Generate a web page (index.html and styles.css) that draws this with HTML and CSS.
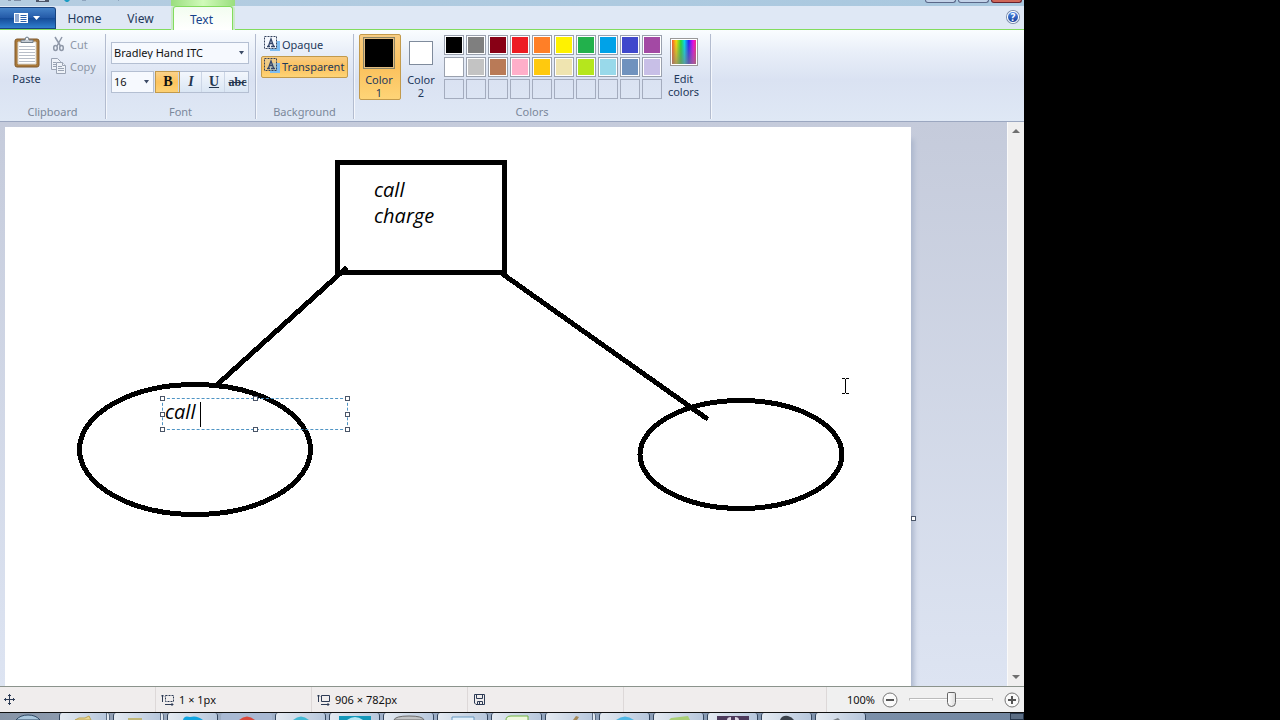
FILE: index.html
```html
<!DOCTYPE html>
<html lang="en">
<head>
    <meta charset="UTF-8">
    <meta name="viewport" content="width=device-width, initial-scale=1.0">
    <title>Paint</title>
    <link rel="stylesheet" href="styles.css">
</head>
<body>
    <div class="window">
        <header class="titlebar">
            <svg class="quick-icons" width="120" height="6" viewBox="0 0 120 6">
                <path d="M8 0h3v1H8zM14 0h7v1h-7z" fill="#7d8da5"/>
                <path d="M36 0h13v2H36z" fill="#4c5568"/>
                <path d="M39 0h6v1h-6z" fill="#c9d6e6"/>
                <path d="M64 0h6l-2 2h-2z" fill="#1b9cc4"/>
                <path d="M82 0h4v1h-4zM118 0h1v1h-1z" fill="#8fa5be"/>
            </svg>
            <div class="context-title"></div>
            <div class="caption-buttons">
                <button class="caption" aria-label="Minimize"></button>
                <button class="caption" aria-label="Maximize"></button>
                <button class="caption close" aria-label="Close"></button>
            </div>
        </header>

        <nav class="tabs">
            <button class="file-button" aria-label="Paint menu">
                <svg width="28" height="12" viewBox="0 0 28 12">
                    <path d="M1 1h14v10H1z" fill="#fff"/>
                    <path d="M2 2h4v8H2z" fill="#8fa9d2"/>
                    <path d="M7.500 3.500h6M7.500 5.500h6M7.500 7.500h6M7.500 9.500h6" stroke="#2d62ac"/>
                    <path d="M20 4h7l-3.500 4z" fill="#fff"/>
                </svg>
            </button>
            <a class="tab" href="#home">Home</a>
            <a class="tab" href="#view">View</a>
            <a class="tab active" href="#text">Text</a>
            <button class="help" aria-label="Help">?</button>
        </nav>

        <section class="ribbon">
            <div class="group clipboard">
                <div class="group-body">
                    <button class="paste">
                        <svg width="26" height="32" viewBox="0 0 26 32">
                            <rect x="1" y="3" width="24" height="28" rx="2" fill="#a9793a" stroke="#80592b"/>
                            <path d="M4 6h18v22H4z" fill="#fff" stroke="#d6d2ca"/>
                            <path d="M5 10.500h16M5 13.500h16M5 16.500h16M5 19.500h16M5 22.500h16M5 25.500h16" stroke="#b8bec8"/>
                            <path d="M7 6.500V4h4q0-3 2-3t2 3h4v2.500z" fill="#c6cdd5" stroke="#707d8a"/>
                            <circle cx="13" cy="3" r="1" fill="#fff"/>
                        </svg>
                        <span>Paste</span>
                    </button>
                    <div class="stack">
                        <button class="small-button" disabled>
                            <svg width="16" height="16" viewBox="0 0 16 16" fill="none" stroke="#8f98a8" stroke-width="1.500">
                                <path d="M4 1l5.500 9M11 1l-5 9"/>
                                <ellipse cx="4.500" cy="12" rx="1.800" ry="2.500"/>
                                <ellipse cx="10.500" cy="12" rx="1.800" ry="2.500"/>
                            </svg>
                            Cut
                        </button>
                        <button class="small-button" disabled>
                            <svg width="16" height="16" viewBox="0 0 16 16" fill="#eef2f8" stroke="#9aa3b3">
                                <path d="M.5.5h6l3 3v8h-9z"/>
                                <path d="M2 4.500h3M2 6.500h3M2 8.500h3"/>
                                <path d="M5.500 4.500h6l3 3v8h-9z"/>
                                <path d="M11.500 4.500v3h3M7 8.500h4M7 10.500h6M7 12.500h6"/>
                            </svg>
                            Copy
                        </button>
                    </div>
                </div>
                <div class="group-label">Clipboard</div>
            </div>

            <div class="group font">
                <div class="group-body font-body">
                    <div class="combo">
                        <select aria-label="Font family"><option>Bradley Hand ITC</option></select>
                        <svg width="7" height="4" viewBox="0 0 7 4"><path d="M1 0h5L3.500 3.500z" fill="#3c4b66"/></svg>
                    </div>
                    <div class="font-row">
                        <div class="combo size">
                            <select aria-label="Font size"><option>16</option></select>
                            <svg width="7" height="4" viewBox="0 0 7 4"><path d="M1 0h5L3.500 3.500z" fill="#3c4b66"/></svg>
                        </div>
                        <div class="styles">
                            <button class="style-button on"><b>B</b></button>
                            <button class="style-button"><i>I</i></button>
                            <button class="style-button"><u>U</u></button>
                            <button class="style-button strike"><s>abc</s></button>
                        </div>
                    </div>
                </div>
                <div class="group-label">Font</div>
            </div>

            <div class="group background">
                <div class="group-body background-body">
                    <button class="option">
                        <svg width="16" height="16" viewBox="0 0 16 16">
                            <path d="M6 5h10v10H6z" fill="#7dbcf0"/>
                            <path d="M.5.5h12v12H.5z" fill="#f5f8fd" stroke="#35425c" stroke-dasharray="2 1"/>
                            <path d="M3 10.500h3M7 10.500h4M4.500 10l2.500-7 2.500 7M5 7.500h4" fill="none" stroke="#34466a" stroke-width="1.300"/>
                        </svg>
                        Opaque
                    </button>
                    <button class="option on">
                        <svg width="16" height="16" viewBox="0 0 16 16">
                            <path d="M6 5h10v10H6z" fill="#7dbcf0"/>
                            <path d="M.5.5h12v12H.5z" fill="#e7cf98" fill-opacity=".6" stroke="#35425c" stroke-dasharray="2 1"/>
                            <path d="M3 10.500h3M7 10.500h4M4.500 10l2.500-7 2.500 7M5 7.500h4" fill="none" stroke="#34466a" stroke-width="1.300"/>
                        </svg>
                        Transparent
                    </button>
                </div>
                <div class="group-label">Background</div>
            </div>

            <div class="group colors">
                <div class="group-body colors-body">
                    <button class="color-button on">
                        <span class="chip black"></span>
                        <span>Color<br>1</span>
                    </button>
                    <button class="color-button">
                        <span class="chip white"></span>
                        <span>Color<br>2</span>
                    </button>
                    <div class="palette" id="palette"></div>
                    <button class="edit-colors">
                        <span class="rainbow"></span>
                        <span>Edit<br>colors</span>
                    </button>
                </div>
                <div class="group-label">Colors</div>
            </div>
        </section>

        <main class="workspace">
            <div class="viewport">
                <div class="canvas">
                    <svg class="drawing" width="906" height="782" viewBox="0 0 906 782" fill="none" stroke="#000" stroke-width="5" stroke-linecap="round" shape-rendering="crispEdges">
                        <rect x="332.500" y="35.500" width="167" height="110"/>
                        <path d="M340 142L214 256M499 148L701 291"/>
                        <ellipse cx="190" cy="322.500" rx="115.500" ry="65"/>
                        <ellipse cx="736" cy="327.500" rx="101" ry="54"/>
                    </svg>
                    <p class="note">call<br>charge</p>
                    <div class="text-frame">
                        <input type="text" value="call" aria-label="Text">
                        <span class="caret"></span>
                        <i class="handle nw"></i><i class="handle n"></i><i class="handle ne"></i>
                        <i class="handle w"></i><i class="handle e"></i>
                        <i class="handle sw"></i><i class="handle s"></i><i class="handle se"></i>
                    </div>
                    <svg class="pointer" width="7" height="16" viewBox="0 0 7 16" fill="none" stroke="#000">
                        <path d="M0 .5h3M4 .5h3M3.500 1v14M0 15.500h3M4 15.500h3"/>
                    </svg>
                    <i class="handle resize"></i>
                </div>
            </div>
            <div class="scrollbar">
                <svg width="8" height="4" viewBox="0 0 8 4"><path d="M0 4l4-4 4 4z" fill="#6f6f6f"/></svg>
                <svg width="8" height="4" viewBox="0 0 8 4"><path d="M0 0l4 4 4-4z" fill="#6f6f6f"/></svg>
            </div>
        </main>

        <footer class="statusbar">
            <div class="cell">
                <svg width="11" height="11" viewBox="0 0 11 11" fill="none" stroke="#2d3b55">
                    <path d="M5.500 0v11M0 5.500h11M4 2l1.500-1.500L7 2M4 9l1.500 1.500L7 9M2 4L.5 5.500 2 7M9 4l1.500 1.500L9 7"/>
                </svg>
            </div>
            <div class="cell">
                <svg width="13" height="12" viewBox="0 0 13 12" fill="none" stroke="#2d3b55">
                    <path d="M1.500 1v7M0 2.500L1.500 1 3 2.500M4 10.500h8M10.500 9l1.500 1.500-1.500 1.500"/>
                    <path d="M4.500 1.500h8v6h-8z" stroke-dasharray="2 1"/>
                </svg>
                1 × 1px
            </div>
            <div class="cell">
                <svg width="13" height="12" viewBox="0 0 13 12" fill="none" stroke="#2d3b55">
                    <path d="M1.500 1v7M0 2.500L1.500 1 3 2.500M4 10.500h8M10.500 9l1.500 1.500-1.500 1.500"/>
                    <path d="M4.500 1.500h8v6h-8z"/>
                </svg>
                906 × 782px
            </div>
            <div class="cell">
                <svg width="12" height="11" viewBox="-1 0 12 11" fill="none" stroke="#2d3b55">
                    <path d="M.5.5h10v10H2l-1.500-1.500zM2.500.5v4h6v-4M3.500 10.500v-3h5v3M5.500 8v2"/>
                </svg>
            </div>
            <div class="cell wide"></div>
            <div class="zoom">
                <label for="zoom">100%</label>
                <button class="round" aria-label="Zoom out">
                    <svg width="16" height="16" viewBox="0 0 16 16"><circle cx="8" cy="8" r="7" fill="#fafafa" stroke="#777"/><path d="M4 8h8" stroke="#555" stroke-width="2"/></svg>
                </button>
                <input type="range" id="zoom" min="0" max="100" value="50">
                <button class="round" aria-label="Zoom in">
                    <svg width="16" height="16" viewBox="0 0 16 16"><circle cx="8" cy="8" r="7" fill="#fafafa" stroke="#777"/><path d="M4 8h8M8 4v8" stroke="#555" stroke-width="2"/></svg>
                </button>
            </div>
        </footer>

        <div class="taskbar">
            <div class="start"><svg width="28" height="7" viewBox="0 0 28 7"><path d="M2 7q4-5 12-5t12 5z" fill="#a9c6dc" stroke="#304a66"/></svg></div>
            <div class="task stacked"><svg width="24" height="7" viewBox="0 0 24 7"><path d="M4 7l4-2 6 0 4-2 2 4z" fill="#e9d795" stroke="#bda758"/></svg></div>
            <div class="task stacked"><svg width="24" height="7" viewBox="0 0 24 7"><path d="M3 5h14v2H3z" fill="#c0b778"/></svg></div>
            <div class="task"><svg width="24" height="7" viewBox="0 0 24 7"><path d="M2 7q1-5 7-3 7-2 13 3z" fill="#10a5e2"/></svg></div>
            <div class="task plain"><svg width="24" height="7" viewBox="0 0 24 7"><path d="M4 7q8-7 16 0z" fill="#da493d"/></svg></div>
            <div class="task"><svg width="24" height="7" viewBox="0 0 24 7"><path d="M4 7q8-7 16 0z" fill="#44bad5"/></svg></div>
            <div class="task"><svg width="32" height="7" viewBox="0 0 32 7"><path d="M0 3h32v4H0z" fill="#1397b9"/><path d="M8 7q8-6 16 0z" fill="#b6e7f4"/></svg></div>
            <div class="task"><svg width="32" height="7" viewBox="0 0 32 7"><path d="M1 7q1-4 15-4t15 4z" fill="#c2c4c6" stroke="#6c6c6c"/></svg></div>
            <div class="task"><svg width="24" height="7" viewBox="0 0 24 7"><path d="M1 7V4h22v3" fill="#e3f0fa" stroke="#6a9ac1"/></svg></div>
            <div class="task"><svg width="24" height="7" viewBox="0 0 24 7"><path d="M1 7q0-4 5-4h17v4" fill="#eef8df" stroke="#72b542"/></svg></div>
            <div class="task stacked"><svg width="24" height="7" viewBox="0 0 24 7"><path d="M16 7l3-4 3 1-2 3z" fill="#a58a5b"/></svg></div>
            <div class="task"><svg width="24" height="7" viewBox="0 0 24 7"><path d="M3 7q9-7 18 0z" fill="#4fb7e5"/></svg></div>
            <div class="task"><svg width="24" height="7" viewBox="0 0 24 7"><path d="M2 7l2-2 17-2 2 4z" fill="#a9cf77"/></svg></div>
            <div class="task"><svg width="32" height="7" viewBox="0 0 32 7"><path d="M0 7V3h32v4z" fill="#4d3a5c"/><path d="M10 7q0-3 4-3v3M18 7V4q4 0 4 3" fill="#ded5e4"/></svg></div>
            <div class="task"><svg width="24" height="7" viewBox="0 0 24 7"><path d="M5 7q2-5 8-4 4 1 6 4z" fill="#3c434c"/></svg></div>
            <div class="task"><svg width="24" height="7" viewBox="0 0 24 7"><path d="M4 7l5-2 2 2z" fill="#7a8086"/></svg></div>
            <div class="show-desktop"></div>
        </div>
    </div>

    <script>
        const colors = [
            '#000000', '#7f7f7f', '#880015', '#ed1c24', '#ff7f27', '#fff200', '#22b14c', '#00a2e8', '#3f48cc', '#a349a4',
            '#ffffff', '#c3c3c3', '#b97a57', '#ffaec9', '#ffc90e', '#efe4b0', '#b5e61d', '#99d9ea', '#7092be', '#c8bfe7'
        ];
        const palette = document.getElementById('palette');

        // last row stays empty for custom colors
        for (let i = 0; i < 30; i++) {
            const swatch = document.createElement('button');
            swatch.className = colors[i] ? 'swatch' : 'swatch empty';
            swatch.setAttribute('aria-label', colors[i] || 'Custom color');
            if (colors[i]) swatch.style.backgroundColor = colors[i];
            palette.appendChild(swatch);
        }
    </script>
</body>
</html>
```

FILE: styles.css
```css
* {
    box-sizing: border-box;
    margin: 0;
    padding: 0;
}

body {
    background: #000;
    font-family: "Segoe UI", "Noto Sans", sans-serif;
    font-size: 11px;
    line-height: 13px;
    color: #1e395b;
}

button, select, input {
    font: inherit;
    color: inherit;
    border: none;
    background: none;
}

svg {
    display: block;
    flex: none;
}

.window {
    width: 80%;
    height: 100vh;
    display: flex;
    flex-direction: column;
    overflow: hidden;
}

/* title bar */
.titlebar {
    height: 6px;
    flex: none;
    display: flex;
    background: linear-gradient(90deg, #b5cde1, #a9c8df);
}

.quick-icons {
    margin-right: 51px;
}

.context-title {
    width: 64px;
    background: linear-gradient(90deg, #9ade7e, #d0fab9, #9ade7e);
}

.caption-buttons {
    display: flex;
    gap: 2px;
    margin-left: auto;
    padding-right: 2px;
}

.caption {
    width: 31px;
    height: 3px;
    background: #c2d2e8;
    border: 1px solid #5a6788;
    border-top: none;
    border-radius: 0 0 3px 3px;
}

.caption.close {
    background: #cf6658;
    border-color: #66202c;
}

/* tabs */
.tabs {
    height: 24px;
    flex: none;
    display: flex;
    align-items: flex-end;
    background: #dfe8f5;
    border-bottom: 1px solid #82dc5d;
    font-size: 12px;
}

.file-button {
    width: 56px;
    height: 22px;
    display: flex;
    align-items: center;
    justify-content: center;
    padding-right: 1px;
    background: linear-gradient(#4482c8, #2359a7 50%, #164b98 51%, #2f7fce);
    border: 1px solid #17427e;
    border-left: none;
    border-radius: 0 3px 0 0;
}

.tab {
    width: 56px;
    height: 22px;
    padding-left: 1px;
    line-height: 24px;
    text-align: center;
    color: #1e395b;
    text-decoration: none;
}

.tab.active {
    width: 60px;
    height: 24px;
    margin: 0 0 -1px 5px;
    padding: 0 3px 0 0;
    line-height: 25px;
    color: #15428b;
    background: linear-gradient(#f3fdf0, #fff);
    border: 1px solid #82dc5d;
    border-bottom: none;
    border-radius: 3px 3px 0 0;
    box-shadow: 2px 0 #cbe9c9, -2px 0 #cbe9c9;
}

.help {
    width: 12px;
    height: 12px;
    margin: 0 5px 6px auto;
    border: 1px solid #fff;
    border-radius: 50%;
    box-shadow: 0 0 0 1px #7b8cab;
    background: linear-gradient(#4e8be8, #173f9c);
    color: #fff;
    font-weight: bold;
    font-size: 10px;
    line-height: 10px;
}

/* ribbon */
.ribbon {
    height: 92px;
    flex: none;
    display: flex;
    padding: 4px 0 2px;
    background: linear-gradient(#fafdff, #e8eef8 25%, #dae2f2 55%, #dfe8f5);
    border-bottom: 1px solid #9ba7c0;
}

.group {
    display: flex;
    flex-direction: column;
    border-right: 1px solid #b3bccf;
    box-shadow: 1px 0 #f4f7fc;
}

.group-body {
    flex: 1;
    display: flex;
}

.group-label {
    height: 14px;
    text-align: center;
    color: #7b889b;
}

.clipboard {
    width: 106px;
}

.paste {
    width: 53px;
    display: flex;
    flex-direction: column;
    align-items: center;
    gap: 4px;
    padding-top: 2px;
}

.stack {
    display: flex;
    flex-direction: column;
}

.small-button {
    height: 22px;
    display: flex;
    align-items: center;
    gap: 3px;
    padding: 0 0 2px;
    margin-left: -2px;
    color: #8d97a7;
}

.font {
    width: 150px;
}

.font-body {
    flex-direction: column;
    gap: 7px;
    padding: 8px 6px 0 5px;
}

.combo {
    height: 22px;
    display: flex;
    align-items: center;
    padding-right: 3px;
    background: #f6f9fe;
    border: 1px solid #b4bfd2;
}

.combo select {
    flex: 1;
    min-width: 0;
    padding: 0 0 2px 2px;
    appearance: none;
    color: #111;
}

.combo.size {
    width: 43px;
}

.font-row {
    display: flex;
    justify-content: space-between;
}

.styles {
    display: flex;
    border: 1px solid #b4bfd2;
    background: linear-gradient(#f3f7fd, #dae6f4);
}

.style-button {
    width: 23px;
    height: 20px;
    padding-left: 2px;
    border-right: 1px solid #ccd6e6;
    font: bold 14px/18px "Liberation Serif", serif;
    color: #24364e;
}

.style-button:last-child {
    border-right: none;
}

.style-button.on {
    background: linear-gradient(#fbd28a, #fdc35d 50%, #fdd174);
    box-shadow: 0 0 0 1px #c29a4c;
    color: #111;
}

.style-button.strike {
    font-size: 12px;
}

.background {
    width: 98px;
}

.background-body {
    flex-direction: column;
    padding: 0 5px;
}

.option {
    height: 22px;
    display: flex;
    align-items: center;
    gap: 2px;
    padding: 0 0 2px 2px;
    border: 1px solid transparent;
    border-radius: 2px;
    white-space: nowrap;
}

.option.on, .color-button.on {
    background: linear-gradient(#f8cc82, #fbc15d 50%, #fed477);
    border-color: #c29a4c;
}

.colors {
    width: 357px;
}

.colors-body {
    align-items: flex-start;
    padding-left: 5px;
}

.color-button {
    width: 42px;
    height: 66px;
    display: flex;
    flex-direction: column;
    align-items: center;
    gap: 4px;
    padding: 2px 2px 0 0;
    border: 1px solid transparent;
    border-radius: 2px;
}

.chip {
    width: 32px;
    height: 32px;
    border: 1px solid #8a8466;
}

.chip.black {
    background: #000;
    box-shadow: inset 0 0 0 1px #e2bc80;
}

.chip.white {
    width: 24px;
    height: 24px;
    margin: 4px;
    border-color: #7f8b9c;
    background: #fff;
}

.palette {
    display: grid;
    grid-template-columns: repeat(10, 20px);
    grid-auto-rows: 20px;
    gap: 2px;
    padding: 1px 0 0 1px;
}

.swatch {
    border: 1px solid #9aa1ae;
    box-shadow: inset 0 0 0 1px #fff;
}

.swatch.empty {
    box-shadow: none;
    border-color: #a4acbe;
}

.edit-colors {
    width: 43px;
    display: flex;
    flex-direction: column;
    align-items: center;
    gap: 6px;
    padding-top: 4px;
}

.rainbow {
    width: 28px;
    height: 28px;
    border: 1px solid #999;
    box-shadow: inset 0 0 0 1px #fff;
    background:
        linear-gradient(rgba(128, 128, 128, 0), rgba(128, 128, 128, 0.7)),
        linear-gradient(90deg, #f33, #fd0 20%, #2d3 38%, #0de 52%, #22f 68%, #e0e 85%, #f35);
}

/* workspace */
.workspace {
    flex: 1;
    min-height: 0;
    display: flex;
    background: linear-gradient(#c5cbdb, #dde4f2);
}

.viewport {
    flex: 1;
    min-width: 0;
    padding: 5px;
    overflow: hidden;
}

.canvas {
    position: relative;
    width: 906px;
    height: 782px;
    background: #fff;
    box-shadow: 5px 10px 5px -2px #acb7cd;
}

.note {
    position: absolute;
    left: 369px;
    top: 50px;
}

.note, .text-frame input {
    font: 20px/26px "Bradley Hand ITC", "Open Sans", cursive;
    font-style: italic;
    color: #000;
}

.text-frame {
    position: absolute;
    left: 157px;
    top: 271px;
    width: 186px;
    height: 32px;
    border: 1px dashed #4f94c4;
}

.text-frame input {
    width: 100%;
    padding: 0 2px;
}

.caret {
    position: absolute;
    left: 37px;
    top: 3px;
    width: 1px;
    height: 25px;
    background: #000;
}

.handle {
    position: absolute;
    width: 5px;
    height: 5px;
    background: #fff;
    border: 1px solid #4a5568;
}

.nw, .w, .sw { left: -3px; }
.n, .s { left: calc(50% - 2px); }
.ne, .e, .se { right: -3px; }
.nw, .n, .ne { top: -3px; }
.w, .e { top: calc(50% - 2px); }
.sw, .s, .se { bottom: -3px; }

.handle.resize {
    right: -5px;
    top: calc(50% - 2px);
}

.pointer {
    position: absolute;
    left: 837px;
    top: 251px;
}

.scrollbar {
    width: 17px;
    display: flex;
    flex-direction: column;
    align-items: center;
    justify-content: space-between;
    padding: 7px 0;
    background: #f0efef;
    border-left: 1px solid #fafafa;
}

/* status bar */
.statusbar {
    height: 26px;
    flex: none;
    display: flex;
    align-items: stretch;
    background: #f0eded;
    border-top: 1px solid #8b938c;
    color: #111;
}

.cell {
    flex: 0 0 156px;
    display: flex;
    align-items: center;
    gap: 5px;
    padding-left: 4px;
    border-right: 1px solid #ddd8d8;
}

.cell + .cell {
    padding-left: 5px;
}

.cell.wide {
    flex: 1;
}

.zoom {
    display: flex;
    align-items: center;
    gap: 7px;
    padding: 0 4px 0 20px;
    background: #f0f0f0;
}

.round {
    width: 16px;
    height: 16px;
}

#zoom {
    width: 84px;
    height: 18px;
    margin: 0 4px;
    appearance: none;
}

#zoom::-webkit-slider-runnable-track {
    height: 3px;
    background: #fff;
    border: 1px solid #bbb;
    border-bottom-color: #eee;
}

#zoom::-webkit-slider-thumb {
    appearance: none;
    width: 9px;
    height: 15px;
    margin-top: -7px;
    background: linear-gradient(90deg, #fff, #ddd);
    border: 1px solid #666;
    border-radius: 2px 2px 5px 5px;
}

/* taskbar */
.taskbar {
    height: 8px;
    flex: none;
    display: flex;
    gap: 3px;
    overflow: hidden;
    background: linear-gradient(90deg, #8794a6, #a4b5cd 30%, #70859f);
    border-top: 1px solid #111;
}

.start {
    width: 56px;
    display: flex;
    justify-content: center;
}

.task {
    width: 51px;
    display: flex;
    justify-content: center;
    background: linear-gradient(90deg, #e4eaf1, #b7c7dc);
    border: 1px solid #34465e;
    border-width: 0 1px;
    border-radius: 3px 3px 0 0;
}

.task.stacked {
    border-right: 4px double #5a6b82;
}

.task.plain {
    background: #a9b9d3;
    border-color: transparent;
}

.show-desktop {
    width: 14px;
    margin-left: auto;
    background: #5b6d83;
    border: 1px solid #27374c;
}
```
